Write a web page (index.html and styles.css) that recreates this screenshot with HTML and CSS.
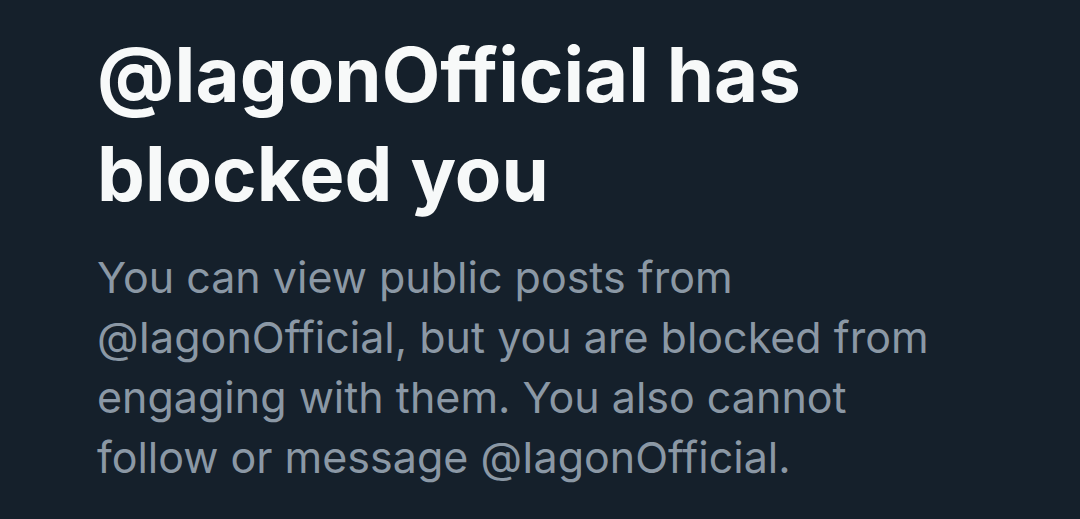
FILE: index.html
```html
<!DOCTYPE html>
<html>
<head>
<meta charset="utf-8">
<link rel="stylesheet" href="styles.css">
</head>
<body>
<main class="blocked">
  <h1 class="blocked-title">@IagonOfficial has blocked you</h1>
  <p class="blocked-text">You can view public posts from @IagonOfficial, but you are blocked from engaging with them. You also cannot follow or message @IagonOfficial.</p>
</main>
</body>
</html>
```
FILE: styles.css
```css
html, body {
  margin: 0;
  padding: 0;
  background: #15202b;
}
body {
  width: 1080px;
  height: 519px;
  overflow: hidden;
  font-family: Inter, Roboto, "Liberation Sans", sans-serif;
  font-variant-ligatures: none;
  font-feature-settings: "liga" 0, "clig" 0;
}
.blocked {
  padding: 25px 0 0 97px;
  width: 860px;
}
.blocked-title {
  margin: 0;
  font-size: 76px;
  line-height: 99px;
  font-weight: 700;
  color: #f7f9f9;
}
.blocked-text {
  margin: 24px 0 0;
  font-size: 43px;
  line-height: 60px;
  font-weight: 400;
  color: #8b98a5;
}
```
